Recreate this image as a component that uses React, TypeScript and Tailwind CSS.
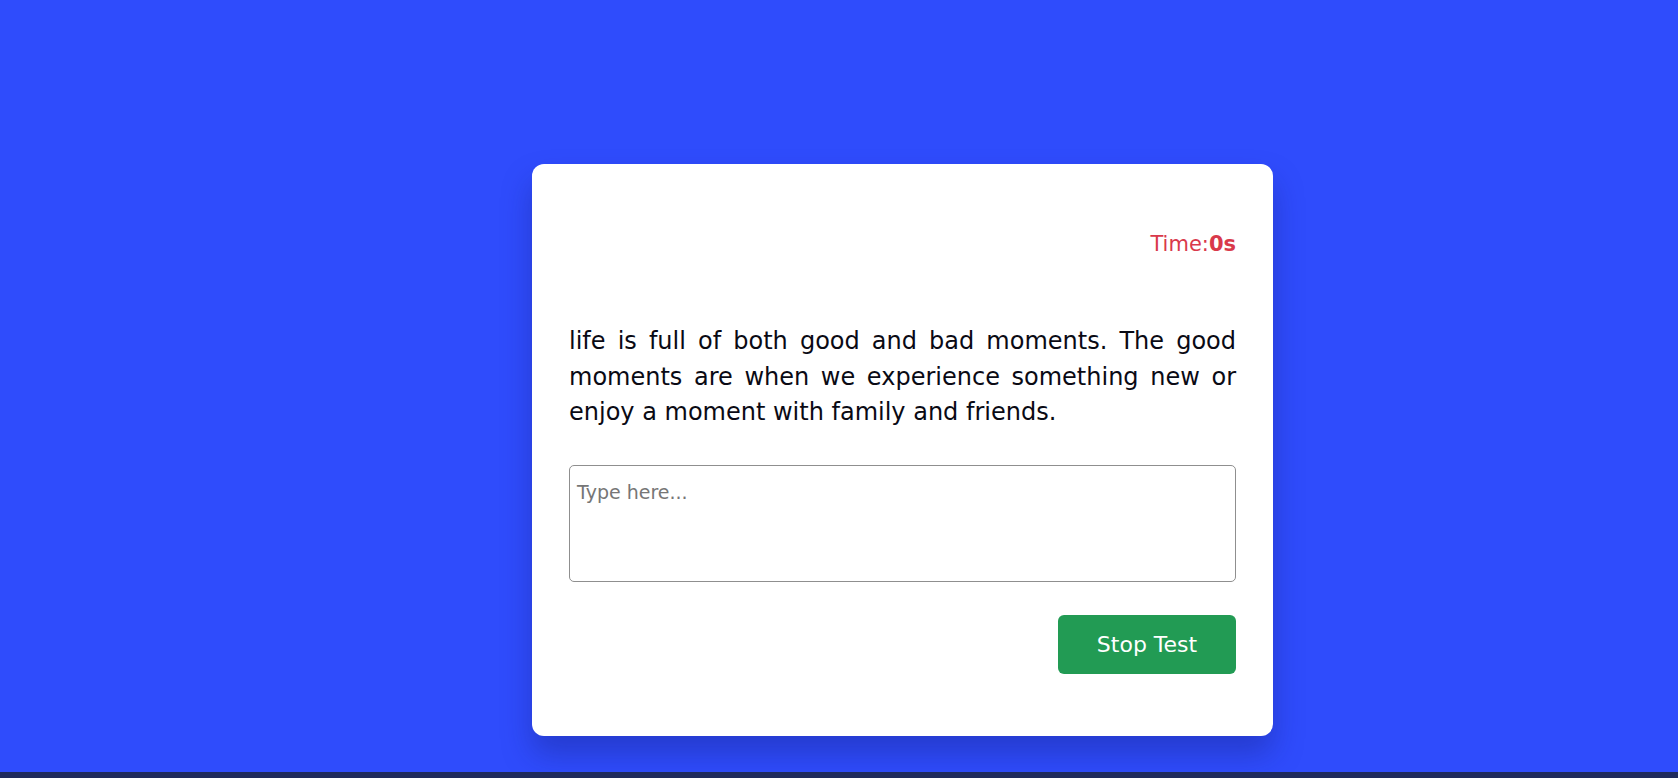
import { useState } from 'react'

const sentence =
  'life is full of both good and bad moments. The good moments are when we experience something new or enjoy a moment with family and friends.'

export default function App() {
  const [value, setValue] = useState('')

  return (
    <div
      className="flex h-[778px] w-full flex-col overflow-hidden bg-[#2f4cfc]"
      style={{ fontFamily: "'DejaVu Sans', 'Noto Sans', sans-serif" }}
    >
      <div className="flex flex-1 items-start pl-[532px] pt-[164px]">
        <div className="flex h-[572px] w-[741px] flex-col rounded-[12px] bg-white px-[37px] pt-[65px] shadow-[0_18px_30px_rgba(20,30,120,0.35)]">
          <div className="flex justify-end text-[21px] leading-[30px] text-[#d9394b]">
            Time:<span className="font-bold">0s</span>
          </div>

          <p className="mt-[65px] text-justify text-[24px] leading-[35.5px] text-[#0a0a14]">
            {sentence}
          </p>

          <textarea
            value={value}
            onChange={(e) => setValue(e.target.value)}
            placeholder="Type here..."
            className="mt-[34px] h-[117px] w-full resize-none rounded-[5px] border border-[#8f8f8f] px-[7px] pt-[12px] pb-[8px] text-[19px] leading-[28px] text-black outline-none placeholder:text-[#767676]"
          />

          <div className="mt-[33px] flex justify-end">
            <button className="h-[59px] w-[178px] rounded-[6px] bg-[#229b54] text-[22px] text-white">
              Stop Test
            </button>
          </div>
        </div>
      </div>
      <div className="h-[6px] bg-[#1f2a5c]" />
    </div>
  )
}
